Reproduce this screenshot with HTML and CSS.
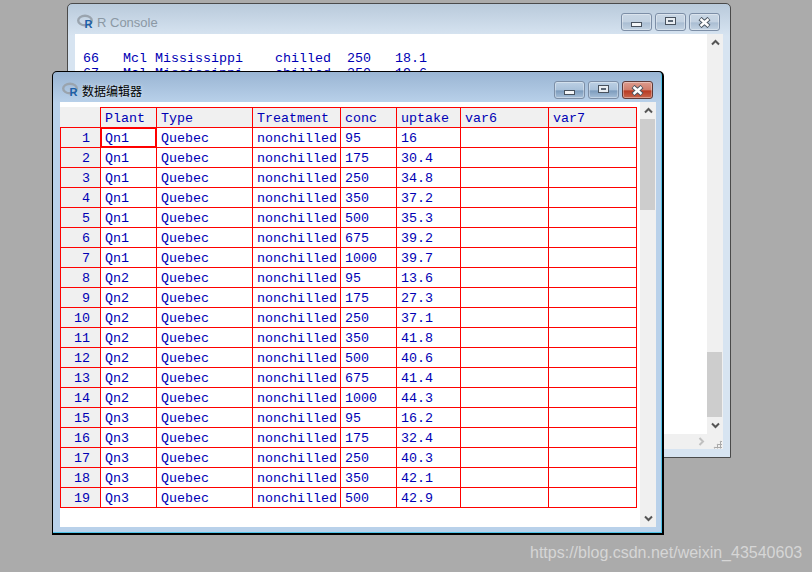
FILE: index.html
```html
<!DOCTYPE html>
<html lang="en">
<head>
    <meta charset="UTF-8">
    <meta name="viewport" content="width=device-width, initial-scale=1.0">
    <title>R Console</title>
    <link rel="stylesheet" href="styles.css">
</head>
<body>
    <div class="window console">
        <div class="titlebar">
            <svg class="logo" viewBox="0 0 18 16">
                <ellipse cx="8" cy="6.5" rx="6.8" ry="4.8" fill="none" stroke="#9aa4ae" stroke-width="2.4"/>
                <text x="7.5" y="13.5" class="rletter">R</text>
            </svg>
            <span class="title">R Console</span>
            <div class="buttons">
                <div class="btn"><span class="min-icon"></span></div>
                <div class="btn"><span class="max-icon"></span></div>
                <div class="btn"><svg class="x-icon" viewBox="0 0 13 11">
                    <path d="M2 1.5 L11 9.5 M11 1.5 L2 9.5" stroke="#4a5560" stroke-width="4.4" fill="none"/>
                    <path d="M2.5 2 L10.5 9 M10.5 2 L2.5 9" stroke="#fff" stroke-width="2.4" fill="none"/>
                </svg></div>
            </div>
        </div>
        <div class="client">
            <div class="client-row">
                <pre class="output">66   Mcl Mississippi    chilled  250   18.1
67   Mcl Mississippi    chilled  350   19.6</pre>
                <div class="scrollbar">
                    <div class="arrow"><svg class="chev" viewBox="0 0 9 7"><path d="M1 5.5 L4.5 2 L8 5.5" fill="none" stroke="currentColor" stroke-width="2"/></svg></div>
                    <div class="track end"><div class="thumb thumb-console"></div></div>
                    <div class="arrow"><svg class="chev" viewBox="0 0 9 7"><path d="M1 1.5 L4.5 5 L8 1.5" fill="none" stroke="currentColor" stroke-width="2"/></svg></div>
                </div>
            </div>
            <div class="hbar">
                <svg class="chev-right" viewBox="0 0 7 9"><path d="M1.5 1 L5 4.5 L1.5 8" fill="none" stroke="currentColor" stroke-width="2"/></svg>
                <div class="grip"></div>
            </div>
        </div>
    </div>

    <div class="window editor">
        <div class="titlebar">
            <svg class="logo" viewBox="0 0 18 16">
                <ellipse cx="8" cy="6.5" rx="6.8" ry="4.8" fill="none" stroke="#9aa4ae" stroke-width="2.4"/>
                <text x="7.5" y="13.5" class="rletter">R</text>
            </svg>
            <span class="title">数据编辑器</span>
            <div class="buttons">
                <div class="btn"><span class="min-icon"></span></div>
                <div class="btn"><span class="max-icon"></span></div>
                <div class="btn close"><svg class="x-icon" viewBox="0 0 13 11">
                    <path d="M2 1.5 L11 9.5 M11 1.5 L2 9.5" stroke="#4a5560" stroke-width="4.4" fill="none"/>
                    <path d="M2.5 2 L10.5 9 M10.5 2 L2.5 9" stroke="#fff" stroke-width="2.4" fill="none"/>
                </svg></div>
            </div>
        </div>
        <div class="client client-row">
            <div class="sheet">
                <table>
                    <thead>
                        <tr>
                            <th class="corner"></th>
                            <th class="c-plant">Plant</th>
                            <th class="c-type">Type</th>
                            <th class="c-treat">Treatment</th>
                            <th class="c-conc">conc</th>
                            <th class="c-uptake">uptake</th>
                            <th class="c-var">var6</th>
                            <th class="c-var">var7</th>
                        </tr>
                    </thead>
                    <tbody>
                        <tr><td class="num">1</td><td class="selected">Qn1</td><td>Quebec</td><td>nonchilled</td><td>95</td><td>16</td><td></td><td></td></tr>
                        <tr><td class="num">2</td><td>Qn1</td><td>Quebec</td><td>nonchilled</td><td>175</td><td>30.4</td><td></td><td></td></tr>
                        <tr><td class="num">3</td><td>Qn1</td><td>Quebec</td><td>nonchilled</td><td>250</td><td>34.8</td><td></td><td></td></tr>
                        <tr><td class="num">4</td><td>Qn1</td><td>Quebec</td><td>nonchilled</td><td>350</td><td>37.2</td><td></td><td></td></tr>
                        <tr><td class="num">5</td><td>Qn1</td><td>Quebec</td><td>nonchilled</td><td>500</td><td>35.3</td><td></td><td></td></tr>
                        <tr><td class="num">6</td><td>Qn1</td><td>Quebec</td><td>nonchilled</td><td>675</td><td>39.2</td><td></td><td></td></tr>
                        <tr><td class="num">7</td><td>Qn1</td><td>Quebec</td><td>nonchilled</td><td>1000</td><td>39.7</td><td></td><td></td></tr>
                        <tr><td class="num">8</td><td>Qn2</td><td>Quebec</td><td>nonchilled</td><td>95</td><td>13.6</td><td></td><td></td></tr>
                        <tr><td class="num">9</td><td>Qn2</td><td>Quebec</td><td>nonchilled</td><td>175</td><td>27.3</td><td></td><td></td></tr>
                        <tr><td class="num">10</td><td>Qn2</td><td>Quebec</td><td>nonchilled</td><td>250</td><td>37.1</td><td></td><td></td></tr>
                        <tr><td class="num">11</td><td>Qn2</td><td>Quebec</td><td>nonchilled</td><td>350</td><td>41.8</td><td></td><td></td></tr>
                        <tr><td class="num">12</td><td>Qn2</td><td>Quebec</td><td>nonchilled</td><td>500</td><td>40.6</td><td></td><td></td></tr>
                        <tr><td class="num">13</td><td>Qn2</td><td>Quebec</td><td>nonchilled</td><td>675</td><td>41.4</td><td></td><td></td></tr>
                        <tr><td class="num">14</td><td>Qn2</td><td>Quebec</td><td>nonchilled</td><td>1000</td><td>44.3</td><td></td><td></td></tr>
                        <tr><td class="num">15</td><td>Qn3</td><td>Quebec</td><td>nonchilled</td><td>95</td><td>16.2</td><td></td><td></td></tr>
                        <tr><td class="num">16</td><td>Qn3</td><td>Quebec</td><td>nonchilled</td><td>175</td><td>32.4</td><td></td><td></td></tr>
                        <tr><td class="num">17</td><td>Qn3</td><td>Quebec</td><td>nonchilled</td><td>250</td><td>40.3</td><td></td><td></td></tr>
                        <tr><td class="num">18</td><td>Qn3</td><td>Quebec</td><td>nonchilled</td><td>350</td><td>42.1</td><td></td><td></td></tr>
                        <tr><td class="num">19</td><td>Qn3</td><td>Quebec</td><td>nonchilled</td><td>500</td><td>42.9</td><td></td><td></td></tr>
                    </tbody>
                </table>
            </div>
            <div class="scrollbar">
                <div class="arrow"><svg class="chev" viewBox="0 0 9 7"><path d="M1 5.5 L4.5 2 L8 5.5" fill="none" stroke="currentColor" stroke-width="2"/></svg></div>
                <div class="track"><div class="thumb thumb-editor"></div></div>
                <div class="arrow"><svg class="chev" viewBox="0 0 9 7"><path d="M1 1.5 L4.5 5 L8 1.5" fill="none" stroke="currentColor" stroke-width="2"/></svg></div>
            </div>
        </div>
    </div>

    <div class="watermark">https://blog.csdn.net/weixin_43540603</div>
</body>
</html>
```

FILE: styles.css
```css
body {
    margin: 0;
    width: 812px;
    height: 572px;
    overflow: hidden;
    position: relative;
    background-color: #ababab;
    font-family: "Liberation Mono", monospace;
    font-size: 13.33px;
    color: #0000b4;
}
.rletter {
    font-family: "Liberation Sans", sans-serif;
    font-size: 11px;
    font-weight: bold;
    fill: #1c5fa8;
}

/* windows */
.window {
    position: absolute;
    box-sizing: border-box;
    display: flex;
    flex-direction: column;
    border-radius: 5px 5px 0 0;
}
.console {
    left: 67px;
    top: 3px;
    width: 664px;
    height: 455px;
    padding: 0 7px 8px 7px;
    border: 1px solid #4a4a4a;
    background: linear-gradient(to bottom, #b9cadb 0, #d7e4f1 32px, #d7e4f1 100%);
}
.editor {
    left: 52px;
    top: 71px;
    width: 612px;
    height: 464px;
    padding: 0 6px 6px 7px;
    border: 1px solid #000;
    border-width: 1px 2px 2px 1px;
    background: linear-gradient(to bottom, #9ab5d3 0, #b9d1ea 31px, #b9d1ea 100%);
    box-shadow: inset -1px -1px 0 #4fc3e8;
}
.titlebar {
    box-sizing: border-box;
    height: 30px;
    padding-top: 6px;
    flex: none;
    display: flex;
    align-items: center;
    gap: 2px;
}
.logo {
    width: 18px;
    height: 16px;
    flex: none;
    margin-left: 2px;
}
.title {
    font-family: "Liberation Sans", "Noto Sans CJK SC", sans-serif;
    font-size: 12px;
    color: #000;
    text-shadow: 0 0 4px rgba(255, 255, 255, 0.6);
}
.console .title {
    font-size: 13px;
    color: #8b98a4;
    text-shadow: none;
}

/* caption buttons */
.buttons {
    margin-left: auto;
    margin-right: 3px;
    display: flex;
    gap: 3px;
}
.btn {
    box-sizing: border-box;
    width: 31px;
    height: 18px;
    border: 1px solid #7c8ea6;
    border-radius: 3px;
    display: flex;
    align-items: center;
    justify-content: center;
    background: linear-gradient(to bottom, #c8d6e4 0, #c2d1e1 50%, #a9bdd2 55%, #c3d3e3 100%);
    box-shadow: inset 0 0 0 1px rgba(255, 255, 255, 0.35);
}
.editor .btn {
    background: linear-gradient(to bottom, #bcd0e4 0, #a9c1da 50%, #7d9cbd 55%, #a8c0d9 100%);
}
.editor .btn.close {
    border-color: #5e3a38;
    background: linear-gradient(to bottom, #dc9c8e 0, #d07d6b 50%, #b83a22 55%, #c9664d 100%);
}
.min-icon {
    box-sizing: border-box;
    width: 11px;
    height: 5px;
    margin-top: 5px;
    border: 1px solid #48525e;
    background-color: #f4f6f8;
}
.max-icon {
    box-sizing: border-box;
    width: 11px;
    height: 8px;
    margin-top: -2px;
    border: 1px solid #48525e;
    background: linear-gradient(#5b6775, #5b6775) center / 5px 2px no-repeat, #e8edf2;
}
.x-icon {
    width: 13px;
    height: 11px;
}

/* client areas */
.client {
    flex: 1;
    min-height: 0;
    display: flex;
    flex-direction: column;
    background-color: #fff;
}
.client-row {
    flex: 1;
    min-height: 0;
    display: flex;
    flex-direction: row;
}
.output {
    flex: 1;
    margin: 0;
    padding: 17px 0 0 8px;
    font: inherit;
    line-height: 15px;
}

/* scrollbars */
.scrollbar {
    width: 16px;
    flex: none;
    display: flex;
    flex-direction: column;
    background-color: #f0f0f0;
}
.arrow {
    height: 17px;
    flex: none;
    display: flex;
    align-items: center;
    justify-content: center;
    color: #555;
}
.chev {
    width: 9px;
    height: 7px;
}
.track {
    flex: 1;
    display: flex;
    flex-direction: column;
}
.track.end {
    justify-content: flex-end;
}
.thumb {
    width: 15px;
    background-color: #cdcdcd;
}
.thumb-console {
    height: 65px;
}
.thumb-editor {
    height: 91px;
}
.hbar {
    height: 15px;
    flex: none;
    display: flex;
    align-items: center;
    justify-content: flex-end;
    gap: 8px;
    padding-right: 1px;
    background-color: #f0f0f0;
    color: #c0c0c0;
}
.chev-right {
    width: 7px;
    height: 9px;
}
.grip {
    width: 9px;
    height: 9px;
    margin-top: 5px;
    background:
        radial-gradient(circle, #aaa 1.2px, transparent 1.3px) 0 0 / 3px 3px;
    clip-path: polygon(100% 0, 100% 100%, 0 100%);
}

/* data grid */
.sheet {
    flex: 1;
    padding-top: 5px;
}
table {
    border-collapse: separate;
    border-spacing: 0;
    table-layout: fixed;
    width: 577px;
    font-size: 13.33px;
}
th, td {
    box-sizing: border-box;
    height: 20px;
    padding: 2px 0 0 4px;
    border-right: 1px solid #f00;
    border-bottom: 1px solid #f00;
    text-align: left;
    font-weight: normal;
    white-space: nowrap;
    overflow: hidden;
}
th {
    height: 21px;
    background-color: #f0f0f0;
    border-top: 1px solid #f00;
}
th.corner {
    width: 41px;
    border-top: 0;
    border-bottom: 1px solid #f00;
}
.c-plant { width: 56px; }
.c-type { width: 96px; }
.c-treat { width: 88px; }
.c-conc { width: 56px; }
.c-uptake { width: 64px; }
.c-var { width: 88px; }
td.num {
    padding: 2px 10px 0 0;
    text-align: right;
    background-color: #f0f0f0;
    border-left: 1px solid #f00;
}
td.selected {
    box-shadow: inset 0 0 0 1px #f00;
}

.watermark {
    position: absolute;
    left: 530px;
    top: 544px;
    font-family: "Liberation Sans", sans-serif;
    font-size: 16px;
    color: #d6d6d6;
    white-space: nowrap;
}
```
